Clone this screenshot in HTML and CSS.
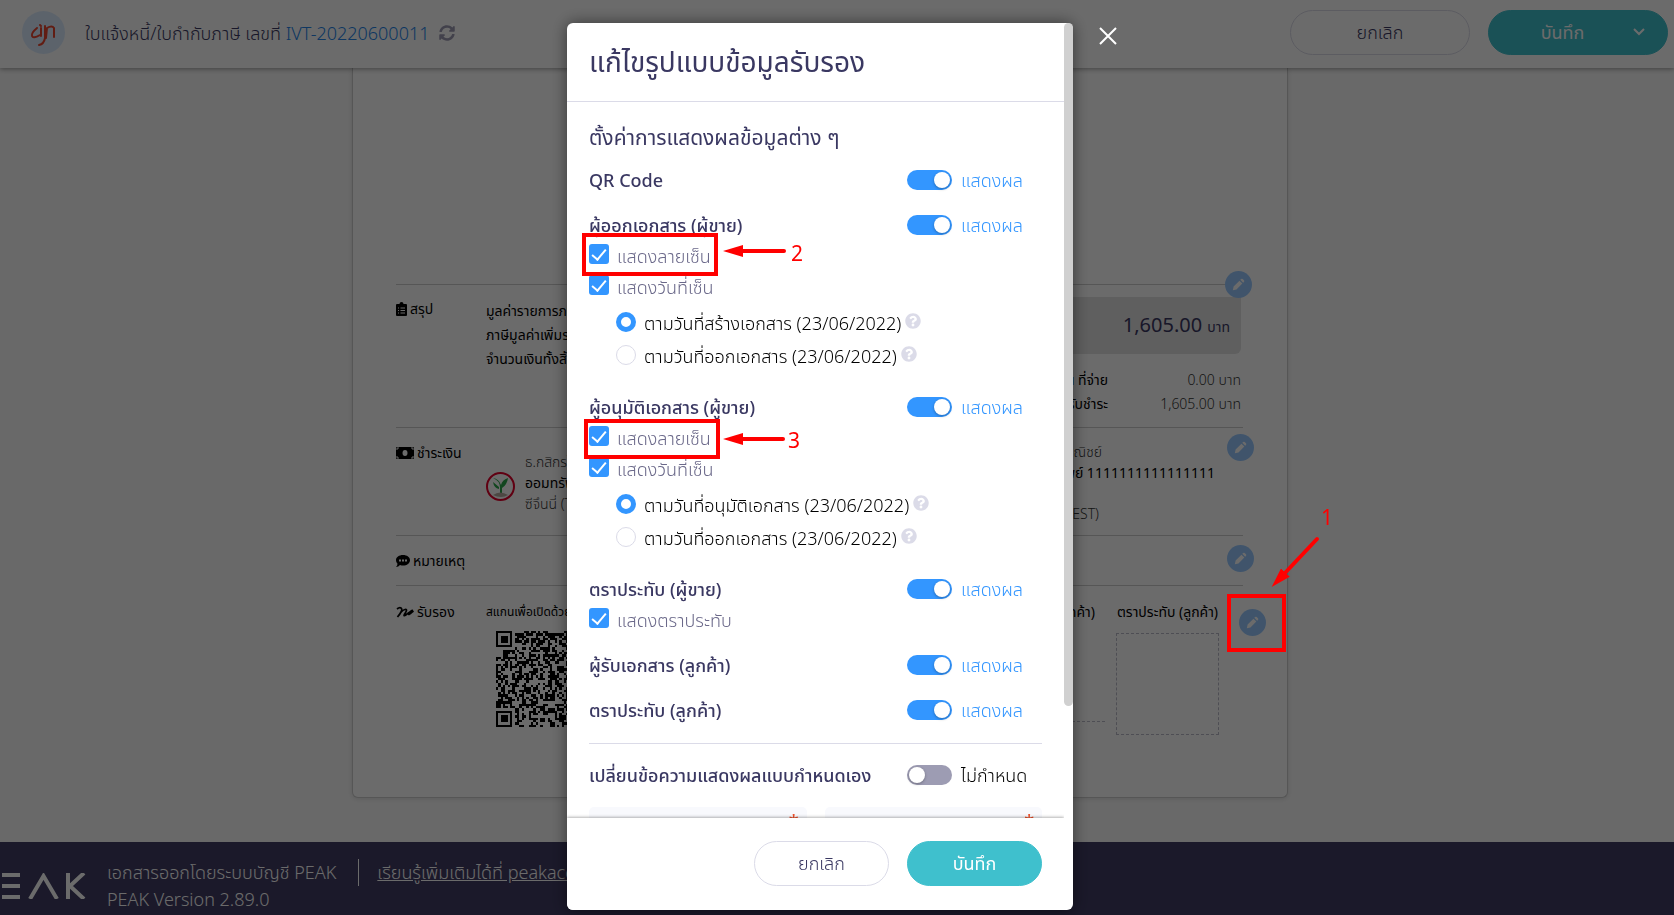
FILE: index.html
```
<!DOCTYPE html>
<html lang="th">
<head>
  <meta charset="UTF-8" />
  <meta name="viewport" content="width=device-width, initial-scale=1.0"/>
  <title>PEAK - แก้ไขรูปแบบข้อมูลรับรอง</title>
  <link rel="stylesheet" href="styles.css">
</head>
<body>
  <svg class="sprite" aria-hidden="true">
    <symbol id="pencil" viewBox="0 0 16 16">
      <path d="M1 15l1-4.500L9.200 3.300l3.500 3.500L5.500 14zM10.200 2.300l1-1a1.400 1.400 0 0 1 2 0l1.500 1.500a1.400 1.400 0 0 1 0 2l-1 1z"/>
    </symbol>
    <symbol id="help" viewBox="0 0 512 512">
      <path d="M504 256c0 136.997-111.043 248-248 248S8 392.997 8 256C8 119.083 119.043 8 256 8s248 111.083 248 248zM262.655 90c-54.497 0-89.255 22.957-116.549 63.758-3.536 5.286-2.353 12.415 2.715 16.258l34.699 26.310c5.205 3.947 12.621 3.008 16.665-2.122 17.864-22.658 30.113-35.797 57.303-35.797 20.429 0 45.698 13.148 45.698 32.958 0 14.976-12.363 22.667-32.534 33.976C247.128 238.528 216 254.941 216 296v4c0 6.627 5.373 12 12 12h56c6.627 0 12-5.373 12-12v-1.333c0-28.462 83.186-29.647 83.186-106.667 0-58.002-60.165-102-116.531-102zM256 338c-25.365 0-46 20.635-46 46 0 25.364 20.635 46 46 46s46-20.636 46-46c0-25.365-20.635-46-46-46z"/>
    </symbol>
  </svg>

  <header class="topbar">
    <svg class="avatar" viewBox="0 0 43 43">
      <circle cx="21.500" cy="21.500" r="21.500" fill="#dcecff"/>
      <path d="M15 17q-6 5-5 8t8-1M18 14l1 1M19 17v8M23 15v12q-1 6-6 7M24 27l1-10q5-3 7 0v9" fill="none" stroke="#e8452f" stroke-width="2" stroke-linecap="round"/>
    </svg>
    <div class="doc-title">ใบแจ้งหนี้/ใบกำกับภาษี เลขที่ <a href="#">IVT-20220600011</a></div>
    <svg class="refresh" viewBox="0 0 512 512"><path d="M370.720 133.280C339.458 104.008 298.888 87.962 255.848 88c-77.458.068-144.328 53.178-162.791 126.850-1.344 5.363-6.122 9.150-11.651 9.150H24.103c-7.498 0-13.194-6.807-11.807-14.176C33.933 94.924 134.813 8 256 8c66.448 0 126.791 26.136 171.315 68.685L463.030 40.970C478.149 25.851 504 36.559 504 57.941V192c0 13.255-10.745 24-24 24H345.941c-21.382 0-32.090-25.851-16.971-40.971l41.750-41.749zM32 296h134.059c21.382 0 32.090 25.851 16.971 40.971l-41.750 41.750c31.262 29.273 71.835 45.319 114.876 45.280 77.418-.070 144.315-53.144 162.787-126.849 1.344-5.363 6.122-9.150 11.651-9.150h57.304c7.498 0 13.194 6.807 11.807 14.176C478.067 417.076 377.187 504 256 504c-66.448 0-126.791-26.136-171.315-68.685L48.970 471.030C33.851 486.149 8 475.441 8 454.059V320c0-13.255 10.745-24 24-24z"/></svg>
    <div class="topbar-actions">
      <button class="btn btn-outline">ยกเลิก</button>
      <button class="btn btn-primary btn-split"><span>บันทึก</span><svg viewBox="0 0 14 8"><path d="M2 1l5 5 5-5"/></svg></button>
    </div>
  </header>

  <main class="page">
    <div class="paper">
      <section class="paper-row row-summary">
        <h4><svg width="11" height="14" viewBox="0 0 11 14"><path d="M1 2h2.500a2 2 0 0 1 4 0H10q1 0 1 1v10q0 1-1 1H1q-1 0-1-1V3q0-1 1-1z"/><path d="M2 6h1M4.500 6H9M2 8.500h1M4.500 8.500H9M2 11h1M4.500 11H9" stroke="#fff"/></svg>สรุป</h4>
        <div class="summary-text">
          <p>มูลค่ารายการภาษี</p>
          <p>ภาษีมูลค่าเพิ่มรวม</p>
          <p>จำนวนเงินทั้งสิ้น</p>
        </div>
        <div class="summary-right">
          <div class="grand">1,605.00 <small>บาท</small></div>
          <dl>
            <dt>หัก ณ ที่จ่าย</dt><dd>0.00 บาท</dd>
            <dt>เงินรับชำระ</dt><dd>1,605.00 บาท</dd>
          </dl>
        </div>
        <button class="edit" aria-label="แก้ไขสรุป"><svg><use href="#pencil"/></svg></button>
      </section>

      <section class="paper-row row-payment">
        <h4><svg width="18" height="12" viewBox="0 0 18 12"><rect width="18" height="12" rx="1"/><ellipse cx="9" cy="6" rx="2.500" ry="3" fill="#fff"/><path d="M1 3V1h2M15 1h2v2M17 9v2h-2M3 11H1V9" fill="none" stroke="#fff"/></svg>ชำระเงิน</h4>
        <div class="bank">
          <svg width="29" height="29" viewBox="0 0 29 29">
            <circle cx="14.500" cy="14.500" r="13.500" fill="none" stroke="#e4002b" stroke-width="2"/>
            <path d="M7 6q7 3 7 9v7h2v-6q5-3 6-10-6 2-7 7-2-6-8-7zM7 10q1 6 6 7v-2z" fill="#2ba84a"/>
            <path d="M7 23q7-5 15 0-3 2-7 2t-8-2z" fill="#b7aba0"/>
          </svg>
          <div>
            <p>ธ.กสิกรไทย</p>
            <p><b>ออมทรัพย์</b></p>
            <p>ซีจึนนี่ (TEST)</p>
          </div>
        </div>
        <div class="bank-right">
          <p class="bank-name">ธ.ไทยพาณิชย์</p>
          <p class="bank-no"><b>ออมทรัพย์ 1111111111111111</b></p>
          <p class="bank-owner">ซีจึนนี่ (TEST)</p>
        </div>
        <button class="edit" aria-label="แก้ไขชำระเงิน"><svg><use href="#pencil"/></svg></button>
      </section>

      <section class="paper-row row-note">
        <h4><svg width="14" height="12" viewBox="0 0 14 12"><path d="M7 0c4 0 7 2.200 7 5.200s-3 5.300-7 5.300q-1.500 0-3-.5Q2.500 12 0 12q1.500-1.500 1.500-3.200Q0 7.500 0 5.200C0 2.200 3 0 7 0z"/><path d="M3 5.500h2M6 5.500h2M9 5.500h2" stroke="#fff" stroke-width="2"/></svg>หมายเหตุ</h4>
        <button class="edit" aria-label="แก้ไขหมายเหตุ"><svg><use href="#pencil"/></svg></button>
      </section>

      <section class="paper-row row-approve">
        <h4><svg width="18" height="12" viewBox="0 0 18 12"><path d="M1 3q2.500-2 4-1t0 4-3.500 5Q6 4 9 3.500t0 4 3.500-.5 2-.5 3-1.500" fill="none" stroke="#000" stroke-width="1.700"/></svg>รับรอง</h4>
        <div class="scan">
          <p>สแกนเพื่อเปิดด้วยเว็บ</p>
          <svg id="qr" viewBox="0 0 41 41" shape-rendering="crispEdges"></svg>
        </div>
        <div class="signs">
          <div class="sign"><p>ผู้รับ (ลูกค้า)</p><div class="sign-line"></div></div>
          <div class="stamp"><p>ตราประทับ (ลูกค้า)</p><div class="stamp-box"></div></div>
        </div>
        <button class="edit" aria-label="แก้ไขรับรอง"><svg><use href="#pencil"/></svg></button>
      </section>
    </div>
  </main>

  <footer class="footer">
    <svg class="logo" viewBox="0 0 86 26"><path d="M2 2h18M2 13h18M2 24h18M30 26L43.500 3 57 26M68 0v26M84 0L70 13l14 13" fill="none" stroke="#fff" stroke-width="4"/></svg>
    <div class="footer-text">
      <p>เอกสารออกโดยระบบบัญชี PEAK</p>
      <p>PEAK Version 2.89.0</p>
    </div>
    <a class="footer-link" href="#">เรียนรู้เพิ่มเติมได้ที่ peakaccount.com</a>
  </footer>

  <div class="overlay">
    <div class="modal" role="dialog" aria-labelledby="modalTitle">
      <div class="modal-main">
        <h2 id="modalTitle">แก้ไขรูปแบบข้อมูลรับรอง</h2>
        <form class="modal-body">
          <h3>ตั้งค่าการแสดงผลข้อมูลต่าง ๆ</h3>

          <div class="group">
            <div class="row"><span>QR Code</span><label><input type="checkbox" class="toggle" checked>แสดงผล</label></div>
          </div>

          <div class="group">
            <div class="row"><span>ผู้ออกเอกสาร (ผู้ขาย)</span><label><input type="checkbox" class="toggle" checked>แสดงผล</label></div>
            <label class="check"><input type="checkbox" checked>แสดงลายเซ็น</label>
            <label class="check"><input type="checkbox" checked>แสดงวันที่เซ็น</label>
            <div class="radios">
              <label><input type="radio" name="seller" checked>ตามวันที่สร้างเอกสาร (23/06/2022)<svg><use href="#help"/></svg></label>
              <label><input type="radio" name="seller">ตามวันที่ออกเอกสาร (23/06/2022)<svg><use href="#help"/></svg></label>
            </div>
          </div>

          <div class="group">
            <div class="row"><span>ผู้อนุมัติเอกสาร (ผู้ขาย)</span><label><input type="checkbox" class="toggle" checked>แสดงผล</label></div>
            <label class="check"><input type="checkbox" checked>แสดงลายเซ็น</label>
            <label class="check"><input type="checkbox" checked>แสดงวันที่เซ็น</label>
            <div class="radios">
              <label><input type="radio" name="approver" checked>ตามวันที่อนุมัติเอกสาร (23/06/2022)<svg><use href="#help"/></svg></label>
              <label><input type="radio" name="approver">ตามวันที่ออกเอกสาร (23/06/2022)<svg><use href="#help"/></svg></label>
            </div>
          </div>

          <div class="group">
            <div class="row"><span>ตราประทับ (ผู้ขาย)</span><label><input type="checkbox" class="toggle" checked>แสดงผล</label></div>
            <label class="check"><input type="checkbox" checked>แสดงตราประทับ</label>
          </div>

          <div class="group">
            <div class="row"><span>ผู้รับเอกสาร (ลูกค้า)</span><label><input type="checkbox" class="toggle" checked>แสดงผล</label></div>
          </div>

          <div class="group">
            <div class="row"><span>ตราประทับ (ลูกค้า)</span><label><input type="checkbox" class="toggle" checked>แสดงผล</label></div>
          </div>

          <div class="group custom">
            <div class="row"><span>เปลี่ยนข้อความแสดงผลแบบกำหนดเอง</span><label class="off"><input type="checkbox" class="toggle">ไม่กำหนด</label></div>
          </div>

          <div class="fields">
            <div class="field"><input type="text" aria-label="ข้อความ 1"><span>*</span></div>
            <div class="field"><input type="text" aria-label="ข้อความ 2"><span>*</span></div>
          </div>
        </form>
        <div class="modal-footer">
          <button class="btn btn-outline">ยกเลิก</button>
          <button class="btn btn-primary">บันทึก</button>
        </div>
      </div>
      <div class="scrollbar"><div class="thumb"></div></div>
      <button class="close" aria-label="ปิด"><svg viewBox="0 0 20 20"><path d="M2 2l16 16M18 2L2 18"/></svg></button>
    </div>
  </div>

  <!-- step markers drawn over the screen -->
  <svg class="marks" aria-hidden="true">
    <defs>
      <marker id="head" viewBox="0 0 20 12" refX="2" refY="6" markerWidth="20" markerHeight="12" markerUnits="userSpaceOnUse" orient="auto"><path d="M0 0L20 6L0 12z" fill="#f00" stroke="none"/></marker>
    </defs>
    <rect x="1229" y="596" width="55" height="54"/>
    <rect x="584" y="235" width="132" height="39"/>
    <rect x="586" y="421" width="132" height="36"/>
    <path d="M1317 539L1284 574" marker-end="url(#head)"/>
    <path d="M784 251H741" marker-end="url(#head)"/>
    <path d="M783 439H741" marker-end="url(#head)"/>
    <text x="1321" y="525">1</text>
    <text x="791" y="261">2</text>
    <text x="788" y="448">3</text>
  </svg>

  <script>
    const size = 41;
    const finders = [[0, 0], [0, size - 7], [size - 7, 0]];
    let seed = 20220623;

    function random() {
      seed = (seed * 1103515245 + 12345) % 2147483648;
      return seed / 2147483648;
    }

    function isDark(x, y) {
      const noise = random() > 0.48;
      for (const [fx, fy] of finders) {
        const dx = x - fx;
        const dy = y - fy;
        if (dx < -1 || dx > 7 || dy < -1 || dy > 7) continue;
        const ring = Math.max(Math.abs(dx - 3), Math.abs(dy - 3));
        return ring === 3 || ring < 2;
      }
      return noise;
    }

    let d = "";
    for (let y = 0; y < size; y++) {
      for (let x = 0; x < size; x++) {
        if (isDark(x, y)) d += `M${x} ${y}h1v1h-1z`;
      }
    }
    document.getElementById("qr").innerHTML = `<path d="${d}"/>`;
  </script>
</body>
</html>
```
FILE: styles.css
```
:root {
  --navy: #3a3862;
  --blue: #3396ff;
  --teal: #3fc0cd;
  --line: #dbdbe8;
  --muted: #9d9cb3;
}

* {
  box-sizing: border-box;
}

body {
  margin: 0;
  height: 100vh;
  overflow: hidden;
  display: flex;
  flex-direction: column;
  font-family: "Noto Sans", "Noto Sans Thai", Prompt, sans-serif;
  font-size: 18px;
  font-weight: 300;
  line-height: 24px;
  color: #000;
  background-color: #fafafa;
}

h2, h3, h4, p, dl, dd {
  margin: 0;
}

button, input {
  font: inherit;
}

.sprite {
  position: absolute;
  width: 0;
  height: 0;
}

/* top bar */
.topbar {
  display: flex;
  align-items: center;
  height: 68px;
  padding: 0 6px 3px 22px;
  flex-shrink: 0;
  background-color: #fff;
  box-shadow: 0 1px 5px rgba(0, 0, 0, 0.4);
  z-index: 1;
}

.avatar {
  width: 43px;
  height: 43px;
  margin-right: 20px;
}

.doc-title {
  color: var(--navy);
}

.doc-title a {
  color: #2484e8;
  text-decoration: none;
}

.refresh {
  width: 16px;
  height: 16px;
  margin-left: 10px;
  fill: var(--muted);
}

.topbar-actions {
  display: flex;
  gap: 18px;
  margin-left: auto;
}

.topbar-actions .btn {
  width: 180px;
}

.btn {
  width: 135px;
  height: 45px;
  padding: 0 0 2px;
  border-radius: 23px;
  border: 1px solid var(--line);
  background-color: #fff;
  color: var(--navy);
  cursor: pointer;
}

.btn-primary {
  border-color: var(--teal);
  background-color: var(--teal);
  color: #fff;
  font-weight: 400;
}

.btn-split {
  display: flex;
  align-items: center;
}

.btn-split span {
  flex: 1;
  padding-left: 4px;
}

.btn-split svg {
  width: 14px;
  height: 8px;
  margin-right: 21px;
  fill: none;
  stroke: #fff;
  stroke-width: 2;
}

/* document */
.page {
  flex: 1;
  min-height: 0;
  display: flex;
  justify-content: center;
  padding: 0 34px 44px 0;
}

.paper {
  width: 936px;
  padding: 216px 44px 0 43px;
  background-color: #fff;
  border: 1px solid #ccc;
  border-top: none;
  border-radius: 0 0 6px 6px;
  box-shadow: 0 1px 5px rgba(0, 0, 0, 0.12);
  font-size: 14px;
}

.paper-row {
  position: relative;
  display: grid;
  grid-template-columns: 90px 260px 1fr;
  border-top: 1px solid #ccc;
}

.paper-row h4 {
  display: flex;
  align-items: center;
  gap: 3px;
  height: 24px;
  font-weight: 400;
  white-space: nowrap;
}

.paper-row p {
  white-space: nowrap;
}

.row-summary {
  height: 143px;
  padding-top: 12px;
}

.summary-text {
  padding-top: 2px;
  font-weight: 400;
}

.summary-right {
  padding-right: 2px;
}

.grand {
  height: 57px;
  padding-right: 11px;
  border-radius: 0 0 6px 6px;
  background-color: #e2e2e2;
  color: var(--navy);
  font-size: 20px;
  font-weight: 400;
  line-height: 56px;
  text-align: right;
}

.grand small {
  font-size: 14px;
}

.summary-right dl {
  display: grid;
  grid-template-columns: 1fr 133px;
  padding-top: 14px;
  text-align: right;
}

.summary-right dt {
  font-weight: 400;
}

.summary-right dd {
  color: #333;
}

.edit {
  position: absolute;
  right: -11px;
  display: grid;
  place-items: center;
  width: 27px;
  height: 27px;
  padding: 0;
  border: none;
  border-radius: 50%;
  background-color: #99c9ff;
  cursor: pointer;
}

.edit svg {
  width: 13px;
  height: 13px;
  fill: #fff;
}

.row-summary .edit {
  top: -14px;
  right: -9px;
}

.row-payment {
  height: 108px;
  padding-top: 13px;
}

.row-payment .edit {
  top: 6px;
}

.bank {
  display: flex;
  gap: 10px;
  padding-top: 10px;
  line-height: 21px;
  color: #333;
}

.bank svg {
  flex-shrink: 0;
  margin-top: 21px;
}

.bank b,
.bank-right b {
  font-weight: 400;
  color: #000;
}

.bank-right {
  color: #333;
  line-height: 21px;
  text-align: right;
}

.bank-name {
  padding-right: 141px;
}

.bank-no {
  padding-right: 28px;
}

.bank-owner {
  padding: 20px 144px 0 0;
}

.row-note {
  height: 50px;
  padding-top: 13px;
}

.row-note .edit {
  top: 9px;
}

.row-approve {
  padding-top: 14px;
}

.row-approve .edit {
  top: 23px;
  right: -23px;
}

.scan p {
  font-size: 12px;
  font-weight: 400;
}

.signs p {
  font-weight: 400;
}

.scan svg {
  display: block;
  width: 96px;
  height: 96px;
  margin: 7px 0 0 10px;
}

.signs {
  display: flex;
  justify-content: flex-end;
  gap: 11px;
  padding-right: 24px;
}

.sign,
.stamp {
  width: 103px;
}

.sign {
  display: flex;
  flex-direction: column;
  align-items: flex-end;
}

.sign p {
  padding-right: 10px;
}

.stamp p {
  text-align: center;
}

.sign-line {
  width: 103px;
  height: 98px;
  border-bottom: 1px dashed #bbbbc8;
}

.stamp-box {
  height: 102px;
  margin-top: 9px;
  border: 1px dashed #bbbbc8;
}

/* footer */
.footer {
  display: flex;
  align-items: flex-start;
  flex-shrink: 0;
  height: 73px;
  padding-top: 17px;
  background-color: #403c64;
  color: #fff;
  white-space: nowrap;
}

.logo {
  width: 86px;
  height: 26px;
  margin: 14px 21px 0 0;
}

.footer-text {
  line-height: 27px;
}

.footer-link {
  margin-left: 22px;
  padding-left: 18px;
  border-left: 1px solid #fff;
  line-height: 27px;
  color: #fff;
}

/* modal */
.overlay {
  position: fixed;
  inset: 0;
  display: flex;
  justify-content: center;
  padding: 23px 34px 5px 0;
  background-color: rgba(0, 0, 0, 0.58);
  z-index: 10;
}

.modal {
  position: relative;
  display: flex;
  width: 506px;
  border-radius: 6px;
  background-color: #fff;
  box-shadow: 0 0 16px rgba(0, 0, 0, 0.5);
}

.modal-main {
  flex: 1;
  min-width: 0;
  display: flex;
  flex-direction: column;
}

.modal h2 {
  padding: 16px 22px 18px;
  border-bottom: 1px solid var(--line);
  color: var(--navy);
  font-size: 28px;
  font-weight: 400;
  line-height: 44px;
}

.modal-body {
  flex: 1;
  min-height: 0;
  overflow: hidden;
  padding: 23px 22px 0;
  color: var(--navy);
}

.modal h3 {
  margin-bottom: 16px;
  font-size: 21px;
  font-weight: 400;
  line-height: 24px;
}

.group {
  margin-bottom: 15px;
}

.row {
  display: grid;
  grid-template-columns: 1fr 135px;
  align-items: center;
  height: 30px;
  white-space: nowrap;
}

.row > span {
  font-weight: 500;
}

.row label {
  display: flex;
  align-items: center;
  gap: 9px;
  color: var(--blue);
}

.row label.off {
  color: #000;
}

.toggle {
  appearance: none;
  flex-shrink: 0;
  width: 45px;
  height: 20px;
  margin: 0;
  padding: 2px;
  border-radius: 10px;
  background-color: var(--muted);
}

.toggle::before {
  content: "";
  display: block;
  width: 16px;
  height: 16px;
  border-radius: 50%;
  background-color: #fff;
  box-shadow: 0 1px 3px rgba(0, 0, 0, 0.3);
}

.toggle:checked {
  background-color: var(--blue);
}

.toggle:checked::before {
  margin-left: auto;
}

.check {
  display: flex;
  align-items: center;
  gap: 8px;
  height: 31px;
  color: #6b698a;
}

.check input {
  appearance: none;
  display: grid;
  place-items: center;
  width: 20px;
  height: 20px;
  margin: 0 0 3px;
  border-radius: 3px;
  background-color: var(--blue);
}

.check input::before {
  content: "";
  width: 6px;
  height: 12px;
  margin-bottom: 3px;
  border: solid #fff;
  border-width: 0 2px 2px 0;
  transform: rotate(40deg);
}

.radios {
  padding: 4px 0 5px 27px;
  color: #000;
}

.radios label {
  display: flex;
  align-items: center;
  height: 33px;
}

.radios input {
  appearance: none;
  width: 20px;
  height: 20px;
  margin: 0 8px 2px 0;
  border: 1px solid var(--line);
  border-radius: 50%;
}

.radios input:checked {
  border: 5px solid var(--blue);
}

.radios svg {
  width: 16px;
  height: 16px;
  margin: 0 0 3px 4px;
  fill: var(--line);
}

.custom {
  margin-top: 18px;
  padding-top: 16px;
  border-top: 1px solid var(--line);
}

.fields {
  display: grid;
  grid-template-columns: 1fr 1fr;
  gap: 18px;
  padding-top: 2px;
}

.field {
  position: relative;
}

.field input {
  display: block;
  width: 100%;
  height: 45px;
  border: none;
  border-radius: 5px;
  background-color: #f8f9fd;
}

.field span {
  position: absolute;
  top: 2px;
  right: 8px;
  color: #f0532d;
  font-weight: 500;
}

.modal-footer {
  display: flex;
  justify-content: flex-end;
  gap: 18px;
  padding: 23px 22px 24px;
  background-color: #fff;
  border-radius: 0 0 0 6px;
  box-shadow: 0 -1px 3px rgba(0, 0, 0, 0.3);
  clip-path: inset(-4px 0 0 0);
  z-index: 1;
}

.scrollbar {
  width: 9px;
}

.thumb {
  height: 77%;
  border-radius: 5px;
  background-color: #d0d0d0;
}

.close {
  position: absolute;
  top: 3px;
  right: -45px;
  width: 20px;
  height: 20px;
  padding: 0;
  border: none;
  background: none;
  cursor: pointer;
}

.close svg {
  display: block;
  fill: none;
  stroke: #fff;
  stroke-width: 2;
}

.marks {
  position: fixed;
  inset: 0;
  width: 100%;
  height: 100%;
  pointer-events: none;
  z-index: 20;
  fill: none;
  stroke: #f00;
  stroke-width: 4;
  stroke-linecap: round;
}

.marks text {
  fill: #f00;
  stroke: none;
  font-size: 21px;
  font-weight: 400;
}
```
